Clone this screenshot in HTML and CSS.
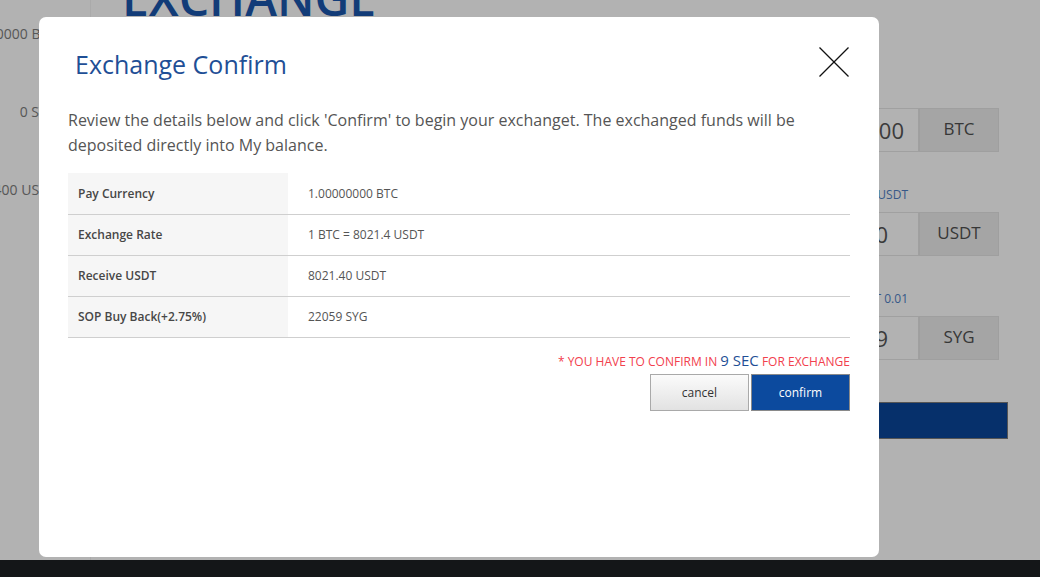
FILE: index.html
```html
<!DOCTYPE html>
<html lang="en">
<head>
  <meta charset="UTF-8">
  <title>Exchange</title>
  <meta name="viewport" content="width=device-width, initial-scale=1.0">
  <link rel="stylesheet" href="styles.css">
</head>
<body>
  <div class="page">
    <aside class="sidebar">
      <p class="balance">1.00000000 BTC</p>
      <p class="balance">0 SYG</p>
      <p class="balance">8021.400 USDT</p>
    </aside>

    <main class="content">
      <h1 class="page-title">EXCHANGE</h1>

      <form class="exchange-form">
        <div class="field">
          <label class="field-label"></label>
          <div class="input-group">
            <input type="text" class="amount amount-pay" value="1.00000000">
            <span class="addon">BTC</span>
          </div>
        </div>
        <div class="field">
          <label class="field-label">1 BTC = 8021.4 USDT</label>
          <div class="input-group">
            <input type="text" class="amount" value="8021.40">
            <span class="addon">USDT</span>
          </div>
        </div>
        <div class="field">
          <label class="field-label">1 SYG = 0.3636 USDT 0.01</label>
          <div class="input-group">
            <input type="text" class="amount" value="22059">
            <span class="addon">SYG</span>
          </div>
        </div>
        <button type="button" class="btn-exchange">Exchange</button>
      </form>
    </main>
  </div>
  <footer class="page-footer"></footer>

  <div class="backdrop">
    <div class="modal">
      <div class="modal-header">
        <h2 class="modal-title">Exchange Confirm</h2>
        <button type="button" class="close-btn" aria-label="close">
          <svg width="30" height="30" viewBox="0 0 30 30">
            <line x1="0.5" y1="0.5" x2="29.5" y2="29.5" stroke="#111" stroke-width="1.3"/>
            <line x1="29.5" y1="0.5" x2="0.5" y2="29.5" stroke="#111" stroke-width="1.3"/>
          </svg>
        </button>
      </div>

      <p class="modal-text">Review the details below and click 'Confirm' to begin your exchanget. The exchanged funds will be deposited directly into My balance.</p>

      <table class="detail-table">
        <tr><th>Pay Currency</th><td>1.00000000 BTC</td></tr>
        <tr><th>Exchange Rate</th><td>1 BTC = 8021.4 USDT</td></tr>
        <tr><th>Receive USDT</th><td>8021.40 USDT</td></tr>
        <tr><th>SOP Buy Back(+2.75%)</th><td>22059 SYG</td></tr>
      </table>

      <p class="notice">* YOU HAVE TO CONFIRM IN <span class="countdown">9 SEC</span> FOR EXCHANGE</p>

      <div class="modal-actions">
        <button type="button" class="btn btn-cancel">cancel</button>
        <button type="button" class="btn btn-confirm">confirm</button>
      </div>
    </div>
  </div>
</body>
</html>
```

FILE: styles.css
```css
* { margin: 0; padding: 0; box-sizing: border-box; }
html, body {
  font-family: 'Open Sans', 'DejaVu Sans', sans-serif;
  background-color: #fff;
  height: 100%;
  overflow: hidden;
}
body {
  display: flex;
  flex-direction: column;
}
.page {
  flex: 1;
  display: flex;
  overflow: hidden;
}
.sidebar {
  width: 91px;
  border-right: 1px solid #f4f4f4;
  padding-top: 24px;
  padding-right: 33px;
  display: flex;
  flex-direction: column;
  align-items: flex-end;
  gap: 59px;
}
.balance {
  font-size: 14px;
  line-height: 19px;
  color: #7d7d7d;
  white-space: nowrap;
}
.content {
  flex: 1;
  display: flex;
  flex-direction: column;
  padding-left: 31px;
}
.page-title {
  font-size: 48px;
  line-height: 48px;
  font-weight: 600;
  color: #1b56ad;
  margin-top: -26px;
}
.exchange-form {
  align-self: flex-end;
  width: 448px;
  margin-right: 32px;
  margin-top: 60px;
}
.field {
  margin-bottom: 34px;
  margin-right: 9px;
}
.field-label {
  display: block;
  min-height: 18px;
  text-align: right;
  padding-right: 91px;
  font-size: 12px;
  line-height: 18px;
  color: #4f7fc4;
  margin-bottom: 8px;
}
.input-group {
  display: flex;
  height: 44px;
}
.amount {
  flex: 1;
  border: 1px solid #e6e6e6;
  background-color: #fff;
  font-family: inherit;
  font-size: 22px;
  color: #555;
  text-align: right;
  padding: 0 30px 0 14px;
}
.amount-pay {
  padding-right: 14px;
}
.addon {
  width: 80px;
  display: flex;
  align-items: center;
  justify-content: center;
  padding-bottom: 3px;
  background-color: #ededed;
  border: 1px solid #e4e4e4;
  font-size: 17px;
  color: #505050;
}
.btn-exchange {
  width: 100%;
  height: 37px;
  margin-top: 8px;
  border: 1px solid #7a7a7a;
  background-color: #0a469a;
  color: #fff;
  font-family: inherit;
  font-size: 14px;
}
.page-footer {
  height: 17px;
  background-color: #1e2023;
}

/* modal */
.backdrop {
  position: fixed;
  inset: 0;
  background-color: rgba(0, 0, 0, 0.3);
  padding: 17px 0 0 39px;
}
.modal {
  width: 840px;
  height: 540px;
  background-color: #fff;
  border-radius: 7px;
  padding: 30px 29px 0 29px;
}
.modal-header {
  display: flex;
  justify-content: space-between;
  align-items: flex-start;
}
.modal-title {
  font-size: 25px;
  line-height: 32px;
  font-weight: 400;
  color: #1f4f96;
  margin-top: 1px;
  padding-left: 7px;
}
.close-btn {
  width: 30px;
  height: 30px;
  border: none;
  background: none;
  cursor: pointer;
  margin-right: 1px;
}
.close-btn svg {
  display: block;
}
.modal-text {
  margin-top: 28px;
  font-size: 16px;
  line-height: 25px;
  color: #555;
}
.detail-table {
  width: 100%;
  margin-top: 15px;
  border-collapse: collapse;
}
.detail-table th,
.detail-table td {
  height: 41px;
  border-bottom: 1px solid #cfcfcf;
  font-size: 12px;
  text-align: left;
  vertical-align: middle;
}
.detail-table th {
  width: 220px;
  padding-left: 10px;
  background-color: #f6f6f6;
  font-weight: 600;
  color: #474747;
}
.detail-table td {
  padding-left: 20px;
  color: #555;
}
.notice {
  margin-top: 13px;
  text-align: right;
  font-size: 12px;
  line-height: 18px;
  color: #f2404d;
}
.countdown {
  font-size: 15px;
  color: #1f4f96;
}
.modal-actions {
  display: flex;
  justify-content: flex-end;
  gap: 2px;
  margin-top: 3px;
}
.btn {
  width: 99px;
  height: 37px;
  font-family: inherit;
  font-size: 12px;
  cursor: pointer;
}
.btn-cancel {
  background: linear-gradient(to bottom, #fbfbfb, #e2e2e2);
  border: 1px solid #a9a9a9;
  color: #333;
}
.btn-confirm {
  background-color: #0c4a9e;
  border: 1px solid #8a8a8a;
  color: #fff;
}
```
